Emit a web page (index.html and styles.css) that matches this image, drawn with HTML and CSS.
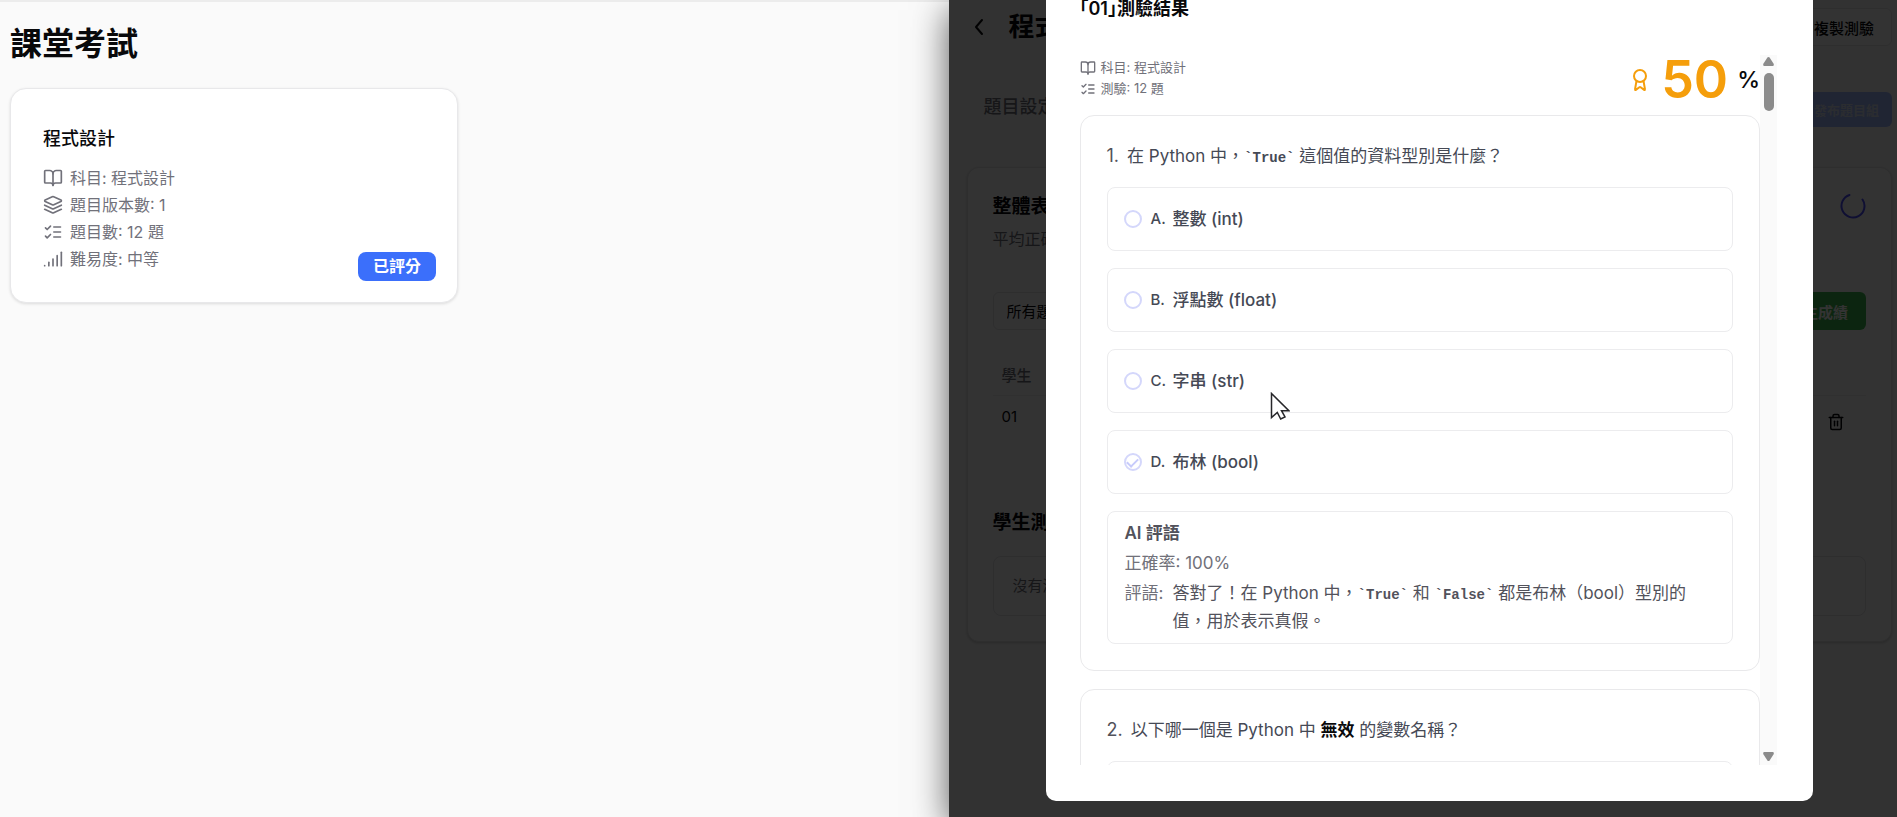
FILE: index.html
```html
<!DOCTYPE html>
<html lang="zh-Hant">
<head>
<meta charset="utf-8">
<meta name="viewport" content="width=device-width, initial-scale=1">
<title>課堂考試</title>
<link rel="stylesheet" href="styles.css">
</head>
<body>
<svg class="sprite" aria-hidden="true">
  <symbol id="i-book" viewBox="0 0 24 24"><path d="M12 7v14"/><path d="M3 18a1 1 0 0 1-1-1V4a1 1 0 0 1 1-1h5a4 4 0 0 1 4 4 4 4 0 0 1 4-4h5a1 1 0 0 1 1 1v13a1 1 0 0 1-1 1h-6a3 3 0 0 0-3 3 3 3 0 0 0-3-3z"/></symbol>
  <symbol id="i-layers" viewBox="0 0 24 24"><path d="m12.8 2.2a2 2 0 0 0-1.700 0L2.600 6.100a1 1 0 0 0 0 1.800l8.600 3.900a2 2 0 0 0 1.700 0l8.600-3.900a1 1 0 0 0 0-1.800z"/><path d="m22 12.200-9.200 4.200a2 2 0 0 1-1.700 0L2 12.200"/><path d="m22 17.200-9.200 4.200a2 2 0 0 1-1.700 0L2 17.200"/></symbol>
  <symbol id="i-list" viewBox="0 0 24 24"><path d="m3 17 2 2 4-4"/><path d="m3 7 2 2 4-4"/><path d="M13 6h8"/><path d="M13 12h8"/><path d="M13 18h8"/></symbol>
  <symbol id="i-signal" viewBox="0 0 24 24"><path d="M2 20h.01"/><path d="M7 20v-4"/><path d="M12 20v-8"/><path d="M17 20V8"/><path d="M22 4v16"/></symbol>
  <symbol id="i-award" viewBox="0 0 24 24"><path d="m15.500 12.900 1.500 8.500a.5.5 0 0 1-.8.500l-3.600-2.700a1 1 0 0 0-1.200 0l-3.600 2.700a.5.5 0 0 1-.8-.500l1.500-8.500"/><circle cx="12" cy="8" r="6"/></symbol>
  <symbol id="i-trash" viewBox="0 0 24 24"><path d="M3 6h18"/><path d="M19 6v14a2 2 0 0 1-2 2H7a2 2 0 0 1-2-2V6"/><path d="M8 6V4a2 2 0 0 1 2-2h4a2 2 0 0 1 2 2v2"/><path d="M10 11v6"/><path d="M14 11v6"/></symbol>
  <symbol id="i-back" viewBox="0 0 24 24"><path d="m15 19-6-7 6-7"/></symbol>
</svg>

<div class="screen">
  <main class="student">
    <h1 class="page-title">課堂考試</h1>
    <article class="exam-card">
      <h2 class="exam-name">程式設計</h2>
      <ul class="exam-meta">
        <li><svg class="icon"><use href="#i-book"/></svg>科目: 程式設計</li>
        <li><svg class="icon"><use href="#i-layers"/></svg>題目版本數: 1</li>
        <li><svg class="icon"><use href="#i-list"/></svg>題目數: 12 題</li>
        <li><svg class="icon"><use href="#i-signal"/></svg>難易度: 中等</li>
      </ul>
      <span class="badge">已評分</span>
    </article>
  </main>

  <section class="teacher">
    <div class="teacher-page">
      <header class="teacher-head">
        <button class="back" aria-label="返回"><svg class="icon"><use href="#i-back"/></svg></button>
        <h2>程式設計</h2>
        <button class="copy">複製測驗</button>
      </header>
      <div class="tab-row">
        <a class="tab" href="#settings">題目設定</a>
        <button class="publish">發布題目組</button>
      </div>
      <div class="panel">
        <div class="panel-head">
          <div>
            <h3>整體表現</h3>
            <p>平均正確率</p>
          </div>
          <svg class="spinner" viewBox="0 0 26 26" aria-hidden="true"><path d="M9.500 2A11.500 11.500 0 1 0 22.500 6.500"/></svg>
        </div>
        <div class="filters">
          <select class="picker" aria-label="題目"><option>所有題目</option></select>
          <button class="grades">學生成績</button>
        </div>
        <table class="students">
          <thead><tr><th>學生</th><th></th></tr></thead>
          <tbody><tr><td>01</td><td class="row-action"><button class="trash" aria-label="刪除"><svg class="icon"><use href="#i-trash"/></svg></button></td></tr></tbody>
        </table>
        <h3 class="sub-title">學生測驗</h3>
        <p class="empty">沒有測驗</p>
      </div>
    </div>

    <div class="overlay">
      <div class="dialog" role="dialog" aria-labelledby="dialog-title">
        <h2 class="dialog-title" id="dialog-title">「01」測驗結果</h2>
        <div class="scroll-area">
          <div class="results">
            <div class="summary">
              <ul class="summary-meta">
                <li><svg class="icon"><use href="#i-book"/></svg>科目: 程式設計</li>
                <li><svg class="icon"><use href="#i-list"/></svg>測驗: 12 題</li>
              </ul>
              <div class="score">
                <svg class="icon"><use href="#i-award"/></svg>
                <strong>50</strong><span>%</span>
              </div>
            </div>

            <fieldset class="question" aria-label="第 1 題">
              <p class="prompt"><span class="num">1.</span><span>在 Python 中，<code>`True`</code> 這個值的資料型別是什麼？</span></p>
              <label class="option"><input type="radio" name="q1" disabled><span class="letter">A.</span>整數 (int)</label>
              <label class="option"><input type="radio" name="q1" disabled><span class="letter">B.</span>浮點數 (float)</label>
              <label class="option"><input type="radio" name="q1" disabled><span class="letter">C.</span>字串 (str)</label>
              <label class="option"><input type="radio" name="q1" checked disabled><span class="letter">D.</span>布林 (bool)</label>
              <div class="feedback">
                <h4>AI 評語</h4>
                <p class="rate">正確率: 100%</p>
                <div class="comment"><span class="comment-key">評語:</span><p>答對了！在 Python 中，<code>`True`</code> 和 <code>`False`</code> 都是布林（bool）型別的值，用於表示真假。</p></div>
              </div>
            </fieldset>

            <fieldset class="question" aria-label="第 2 題">
              <p class="prompt"><span class="num">2.</span><span>以下哪一個是 Python 中 <b>無效</b> 的變數名稱？</span></p>
              <label class="option"><input type="radio" name="q2" aria-label="A" disabled></label>
            </fieldset>
          </div>
          <div class="scrollbar" aria-hidden="true">
            <svg viewBox="0 0 11 9"><path d="M5.500 0 Q6.200 0 6.600 .6L10.800 7Q11 9 10 9H1Q0 9 .2 7L4.400 .6Q4.800 0 5.500 0z"/></svg>
            <div class="track"><div class="thumb"></div></div>
            <svg viewBox="0 0 11 9"><path d="M5.500 9Q6.200 9 6.600 8.400L10.800 2Q11 0 10 0H1Q0 0 .2 2L4.400 8.400Q4.800 9 5.500 9z"/></svg>
          </div>
        </div>
      </div>
    </div>
    <svg class="cursor" viewBox="0 0 20 28" aria-hidden="true"><path d="M1.500 1.500V25.500L7.300 20.500L10.700 27L15 25L11.500 18.700H18.800Z"/></svg>
  </section>
</div>
</body>
</html>
```

FILE: styles.css
```css
* { box-sizing: border-box; }
body, h1, h2, h3, h4, p, ul { margin: 0; padding: 0; }
ul { list-style: none; }
body {
  font-family: Inter, "Noto Sans CJK TC", sans-serif;
  background: #fafafa;
  color: #09090b;
}
button, select { font: inherit; }
.sprite { position: absolute; width: 0; height: 0; }
.icon {
  width: 20px;
  height: 20px;
  flex: none;
  fill: none;
  stroke: currentColor;
  stroke-width: 2;
  stroke-linecap: round;
  stroke-linejoin: round;
}

.screen {
  display: grid;
  grid-template-columns: 1fr 1fr;
  height: 100vh;
  overflow: hidden;
}

/* Student side */
.student {
  padding: 20px 10px;
  border-top: 2px solid #ececec;
}
.page-title {
  font-size: 32px;
  line-height: 44px;
  font-weight: 600;
  margin-bottom: 22px;
}
.exam-card {
  position: relative;
  width: 448px;
  max-width: 100%;
  padding: 37px 32px 30px;
  background: #fff;
  border: 1px solid #e8e8ea;
  border-radius: 16px;
  box-shadow: 0 1px 3px rgba(0, 0, 0, .12);
}
.exam-name {
  font-size: 18px;
  line-height: 26px;
  font-weight: 500;
  margin-bottom: 13px;
}
.exam-meta { display: grid; gap: 1px; font-size: 16px; line-height: 26px; color: #71717a; }
.exam-meta li { display: flex; align-items: center; gap: 7px; }
.badge {
  position: absolute;
  right: 21px;
  bottom: 21px;
  padding: 0 15px;
  border-radius: 8px;
  background: #3b6ffb;
  color: #fff;
  font-size: 16px;
  line-height: 29px;
  font-weight: 700;
}

/* Teacher side */
.teacher {
  position: relative;
  background: #fafafa;
  box-shadow: 0 10px 34px rgba(0, 0, 0, .65);
}
.teacher-page { padding: 7px 5px 0 18px; }
.teacher-head { display: flex; align-items: center; height: 40px; }
.back { border: 0; background: none; padding: 0; width: 24px; height: 24px; color: #09090b; }
.back .icon { width: 24px; height: 24px; }
.teacher-head h2 { font-size: 26px; line-height: 36px; font-weight: 700; margin-left: 18px; flex: 1; }
.copy {
  height: 38px;
  padding: 0 17px;
  border: 1px solid #e4e4e7;
  border-radius: 6px;
  background: #fff;
  color: #09090b;
  font-size: 15px;
  font-weight: 500;
}
.tab-row { display: flex; justify-content: space-between; align-items: start; margin: 45px 0 40px; padding-left: 17px; }
.tab { color: #71717a; text-decoration: none; font-size: 18px; line-height: 30px; font-weight: 500; }
.publish {
  height: 35px;
  padding: 0 13px;
  border: 0;
  border-radius: 6px;
  background: #a0b8ff;
  color: #d8def0;
  font-size: 13px;
  font-weight: 700;
}
.panel {
  padding: 25px;
  background: #fff;
  border: 1px solid #e4e4e7;
  border-radius: 12px;
  box-shadow: 0 1px 3px rgba(0, 0, 0, .2);
}
.panel-head { display: flex; justify-content: space-between; align-items: start; }
.panel-head p { font-size: 16px; line-height: 24px; color: #71717a; margin-top: 6px; }
.panel h3 { font-size: 19px; line-height: 28px; font-weight: 600; }
.spinner { width: 26px; height: 26px; fill: none; stroke: #4b4bff; stroke-width: 2; stroke-linecap: round; }
.filters { display: flex; justify-content: space-between; margin-top: 41px; }
.picker {
  appearance: none;
  width: 180px;
  height: 38px;
  padding: 0 13px;
  border: 1px solid #e4e4e7;
  border-radius: 6px;
  background: #fff;
  color: #09090b;
  font-size: 15px;
}
.grades {
  height: 38px;
  padding: 0 18px;
  border: 0;
  border-radius: 6px;
  background: #3fb950;
  color: #fff;
  font-size: 15px;
  font-weight: 600;
}
.students { width: 100%; margin-top: 25px; border-collapse: collapse; font-size: 15px; }
.students th { height: 40px; padding: 0 9px; text-align: left; font-weight: 500; color: #71717a; border-bottom: 1px solid #efeff1; }
.students td { height: 58px; padding: 10px 9px 0; line-height: 22px; vertical-align: top; }
.students .row-action { padding-top: 17px; text-align: right; }
.trash { border: 0; background: none; padding: 0 12px; color: #09090b; }
.trash .icon { display: block; width: 18px; height: 18px; }
.sub-title { margin-top: 56px; }
.empty {
  margin-top: 19px;
  padding: 18px 19px;
  border: 1px solid #e4e4e7;
  border-radius: 8px;
  font-size: 15px;
  line-height: 22px;
  color: #71717a;
}

/* Result dialog */
.overlay {
  position: absolute;
  inset: 0;
  display: flex;
  justify-content: center;
  align-items: end;
  padding: 0 84px 16px 97px;
  background: rgba(0, 0, 0, .8);
}
.dialog {
  flex: 1;
  padding: 0 36px 36px 34px;
  background: #fff;
  border-radius: 0 0 10px 10px;
}
.dialog-title {
  margin: -4px 0 33px;
  font-size: 18px;
  line-height: 26px;
  font-weight: 600;
  font-feature-settings: "halt";
}
.scroll-area { display: flex; height: calc(100vh - 107px); }
.results { flex: 1; overflow: hidden; }
.summary { display: flex; justify-content: space-between; align-items: center; height: 60px; }
.summary-meta { font-size: 13px; line-height: 21px; color: #71717a; margin-bottom: 14px; }
.summary-meta li { display: flex; align-items: center; gap: 5px; }
.summary-meta .icon { width: 16px; height: 16px; }
.score { display: flex; align-items: center; margin-bottom: 10px; }
.score .icon { width: 24px; height: 24px; color: #f59e0b; }
.score strong { margin: 0 9px; font-size: 52px; line-height: 48px; font-weight: 600; color: #f59e0b; }
.score span { font-size: 23px; line-height: 28px; font-weight: 500; }

.question {
  display: flex;
  flex-direction: column;
  gap: 17px;
  min-width: 0;
  margin: 0 0 18px;
  padding: 26px;
  border: 1px solid #e9e9eb;
  border-radius: 14px;
}
.prompt { display: flex; gap: 8px; font-size: 17px; line-height: 28px; color: #454955; }
.num { font-size: 18px; color: #52525b; }
.prompt b { color: #09090b; }
code { font-family: "Liberation Mono", "DejaVu Sans Mono", monospace; font-size: 14px; line-height: 1; font-weight: 600; }
.option {
  display: flex;
  align-items: center;
  min-height: 64px;
  padding: 0 16px;
  border: 1px solid #ececee;
  border-radius: 8px;
  font-size: 17px;
  line-height: 28px;
  font-weight: 500;
  color: #454955;
}
.option input {
  appearance: none;
  display: grid;
  place-items: center;
  width: 18px;
  height: 18px;
  margin: 0 9px 0 0;
  border: 2px solid #d4d7fb;
  border-radius: 50%;
}
.option input:checked::after {
  content: "";
  width: 5px;
  height: 9px;
  margin-bottom: 2px;
  border: solid #c7cbfb;
  border-width: 0 2px 2px 0;
  rotate: 45deg;
}
.letter { width: 22px; font-size: 15px; }
.feedback {
  padding: 7px 17px 8px;
  border: 1px solid #ececee;
  border-radius: 8px;
  font-size: 17px;
  line-height: 28px;
  color: #52525b;
}
.feedback h4 { font-size: 17px; font-weight: 600; }
.rate, .comment-key { color: #71717a; }
.rate { margin: 2px 0; }
.comment { display: grid; grid-template-columns: 48px 1fr; }

.scrollbar {
  display: flex;
  flex-direction: column;
  align-items: center;
  width: 17px;
  padding: 2px 0 4px;
  background: #fafafa;
}
.scrollbar svg { width: 11px; height: 9px; fill: #8b8b8b; }
.track { flex: 1; padding-top: 7px; }
.thumb { width: 10px; height: 38px; border-radius: 5px; background: #8b8b8b; }

.cursor {
  position: absolute;
  left: 321px;
  top: 392px;
  width: 20px;
  height: 28px;
  fill: #fff;
  stroke: #27272a;
  stroke-width: 1.500;
}
```
